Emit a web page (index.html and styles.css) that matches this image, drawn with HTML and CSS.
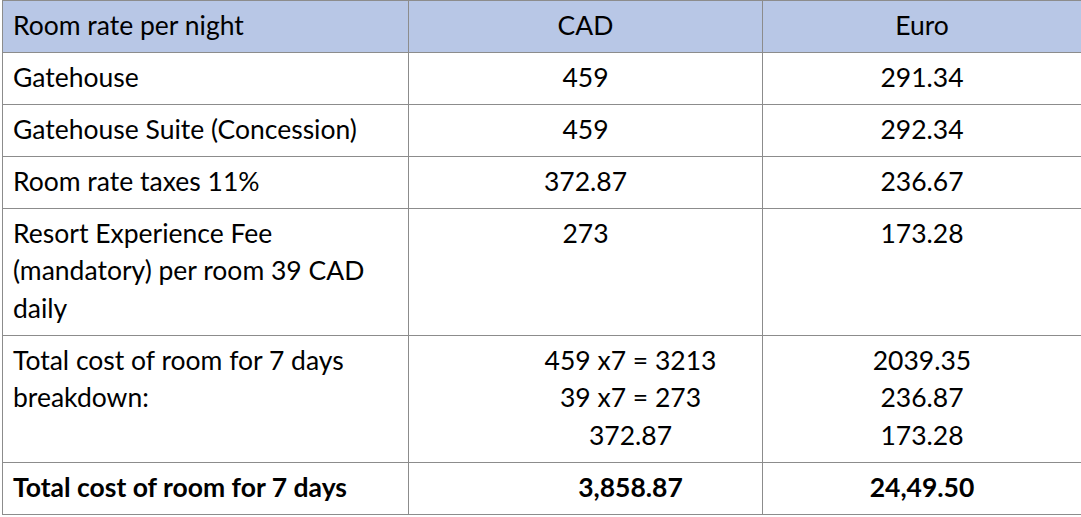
FILE: index.html
```html
<!DOCTYPE html>
<html lang="en">
<head>
<meta charset="utf-8">
<title>Room rates</title>
<link rel="stylesheet" href="styles.css">
</head>
<body>
<table class="rates">
  <colgroup>
    <col class="c1">
    <col class="c2">
    <col class="c3">
  </colgroup>
  <thead>
    <tr class="head">
      <th class="label">Room rate per night</th>
      <th class="num">CAD</th>
      <th class="num">Euro</th>
    </tr>
  </thead>
  <tbody>
    <tr>
      <td class="label">Gatehouse</td>
      <td class="num">459</td>
      <td class="num">291.34</td>
    </tr>
    <tr>
      <td class="label">Gatehouse Suite (Concession)</td>
      <td class="num">459</td>
      <td class="num">292.34</td>
    </tr>
    <tr>
      <td class="label">Room rate taxes 11%</td>
      <td class="num">372.87</td>
      <td class="num">236.67</td>
    </tr>
    <tr>
      <td class="label">Resort Experience Fee<br>(mandatory) per room 39 CAD<br>daily</td>
      <td class="num">273</td>
      <td class="num">173.28</td>
    </tr>
    <tr>
      <td class="label">Total cost of room for 7 days<br>breakdown:</td>
      <td class="num indent">459 x7 = 3213<br>39 x7 = 273<br>372.87</td>
      <td class="num">2039.35<br>236.87<br>173.28</td>
    </tr>
    <tr class="total">
      <td class="label">Total cost of room for 7 days</td>
      <td class="num indent">3,858.87</td>
      <td class="num">24,49.50</td>
    </tr>
  </tbody>
</table>
</body>
</html>
```

FILE: styles.css
```css
html, body {
  margin: 0;
  padding: 0;
  background: #ffffff;
  overflow: hidden;
}

body {
  padding-left: 2px;
  font-family: Lato, "Open Sans", "Liberation Sans", sans-serif;
  font-size: 26.5px;
  color: #000000;
}

.rates {
  border-collapse: collapse;
  table-layout: fixed;
  width: 1079px;
}

.c1 { width: 406px; }
.c2 { width: 354px; }
.c3 { width: 319px; }

.rates th,
.rates td {
  border: 1px solid #8c8c8c;
  padding: 5.5px 10px 8px 10px;
  line-height: 37.5px;
  vertical-align: top;
  font-weight: 400;
}

.rates .head th {
  background: #b8c7e6;
}

.rates .label {
  text-align: left;
}

.rates .num {
  text-align: center;
}

.rates .indent {
  padding-left: 100px;
}

.rates .total td {
  font-weight: 700;
}
```
